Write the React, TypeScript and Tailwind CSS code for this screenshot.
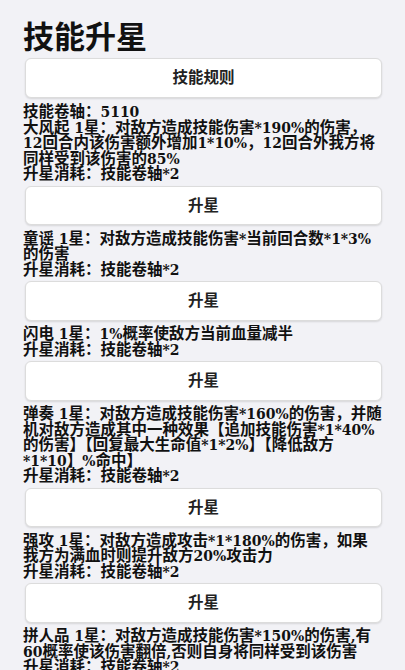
import React from "react";

const skills: string[][] = [
  [
    "技能卷轴：5110",
    "大风起 1星：对敌方造成技能伤害*190%的伤害，",
    "12回合内该伤害额外增加1*10%，12回合外我方将",
    "同样受到该伤害的85%",
  ],
  ["童谣 1星：对敌方造成技能伤害*当前回合数*1*3%", "的伤害"],
  ["闪电 1星：1%概率使敌方当前血量减半"],
  [
    "弹奏 1星：对敌方造成技能伤害*160%的伤害，并随",
    "机对敌方造成其中一种效果【追加技能伤害*1*40%",
    "的伤害】【回复最大生命值*1*2%】【降低敌方",
    "*1*10】%命中】",
  ],
  [
    "强攻 1星：对敌方造成攻击*1*180%的伤害，如果",
    "我方为满血时则提升敌方20%攻击力",
  ],
  [
    "拼人品 1星：对敌方造成技能伤害*150%的伤害,有",
    "60概率使该伤害翻倍,否则自身将同样受到该伤害",
  ],
];

function Btn({ label }: { label: string }) {
  return (
    <button
      type="button"
      className="ml-[2px] flex h-[39.5px] w-[357px] items-center justify-center rounded-md border border-[#dcdcdc] bg-white text-[15.5px] font-bold text-[#222] shadow-[0_1px_2px_rgba(0,0,0,0.12)]"
    >
      {label}
    </button>
  );
}

export default function App() {
  return (
    <div
      className="h-[670px] overflow-hidden bg-[#f2f2f6] px-[23px] pt-[19px]"
      style={{
        fontFamily:
          '"DejaVu Serif Condensed", "DejaVu Serif", "Noto Sans CJK SC", serif',
      }}
    >
      <h1 className="mb-[2px] text-[31px] font-bold leading-[37px] text-[#111]">
        技能升星
      </h1>
      <Btn label="技能规则" />
      {skills.map((s, i) => (
        <div key={i}>
          <div
            className={`mb-[4px] text-[15.5px] font-bold leading-[15.5px] text-[#111] ${
              i === 0 ? "mt-[6.5px]" : "mt-[5.5px]"
            }`}
          >
            {[...s, "升星消耗：技能卷轴*2"].map((l, j) => (
              <div key={j} className="whitespace-nowrap">
                {l}
              </div>
            ))}
          </div>
          {i < skills.length - 1 && <Btn label="升星" />}
        </div>
      ))}
    </div>
  );
}
